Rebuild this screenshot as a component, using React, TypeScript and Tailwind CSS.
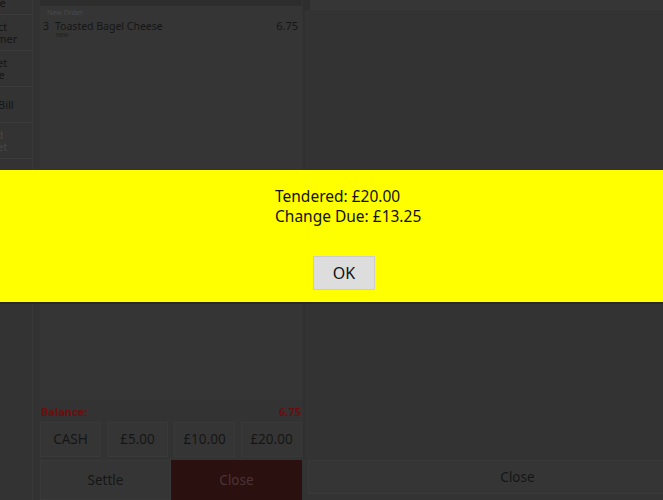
import React from "react";

const font = { fontFamily: '"Noto Sans", "Open Sans", sans-serif' };

function SideBtn({ lines, disabled }: { lines: string[]; disabled?: boolean }) {
  return (
    <div className="h-[36px] border-b border-[#3b3b3b] flex flex-col items-center justify-center ml-[-49px] w-[82px] leading-[12px] text-[11px] whitespace-nowrap">
      {lines.map((l) => (
        <div key={l} className={disabled ? "text-[#474747]" : "text-[#151515]"}>{l}</div>
      ))}
    </div>
  );
}

export default function App() {
  return (
    <div className="relative w-[663px] h-[500px] overflow-hidden bg-[#333333] flex" style={font}>
      {/* left column */}
      <div className="w-[33px] shrink-0 overflow-hidden border-r border-[#383838] flex flex-col">
        <div className="mt-[-21px]">
          <SideBtn lines={["Move", "Table"]} />
          <SideBtn lines={["Select", "Customer"]} />
          <SideBtn lines={["Ticket", "Note"]} />
          <SideBtn lines={["Print Bill"]} />
          <SideBtn lines={["Void", "Ticket"]} disabled />
        </div>
      </div>

      {/* order panel */}
      <div className="ml-[7px] w-[262px] shrink-0 flex flex-col">
        <div className="h-[6px] bg-[#2d2d2d]" />
        <div className="h-[397px] bg-[#353535] px-[3px] pt-[2px]">
          <div className="text-[7px] text-[#4a4a4a] pl-[4px] leading-[9px]">New Order</div>
          <div className="flex items-start mt-[3px] text-[10.5px] text-[#151515] leading-[12px]">
            <div className="w-[12px]">3</div>
            <div className="flex-1">
              <div>Toasted Bagel Cheese</div>
              <div className="text-[5.5px] leading-[6px] pl-[1px] text-[#1e1e1e]">NEW</div>
            </div>
            <div className="pr-[1px] text-[11px]">6.75</div>
          </div>
        </div>
        <div className="h-[19px] flex items-end justify-between px-[1px] text-[11px] font-bold text-[#6a0e0e] leading-[13px] pb-[1px]">
          <span>Balance:</span>
          <span>6.75</span>
        </div>
        <div className="h-[36px] mt-[3px] grid grid-cols-4 gap-[6px] text-[13.5px] text-[#151515]">
          {["CASH", "£5.00", "£10.00", "£20.00"].map((t) => (
            <div key={t} className="bg-[#353535] border border-[#393939] flex items-center justify-center">{t}</div>
          ))}
        </div>
        <div className="h-[40px] mt-[3px] grid grid-cols-2 text-[13.5px]">
          <div className="bg-[#353535] border border-[#393939] flex items-center justify-center text-[#151515]">Settle</div>
          <div className="bg-[#2b1010] flex items-center justify-center text-[#4a3434]">Close</div>
        </div>
      </div>

      {/* right panel */}
      <div className="ml-[1px] flex-1 flex flex-col min-w-0">
        <div className="h-[10px] flex">
          <div className="w-[7px] bg-[#2e2e2e]" />
          <div className="flex-1 bg-[#363636] border-b border-[#383838]" />
        </div>
        <div className="flex-1 flex">
          <div className="w-[2px] bg-[#303030]" />
          <div className="flex-1" />
        </div>
        <div className="h-[34px] mb-[6px] ml-[5px] mr-[-64px] bg-[#353535] border border-[#393939] flex items-center justify-center text-[13.5px] text-[#151515]">
          Close
        </div>
      </div>

      {/* modal band */}
      <div className="absolute left-0 right-0 top-[170px] h-[134px] bg-[#ffff00] border-b-2 border-[#2a2a22] flex flex-col items-start">
        <div className="mt-[16px] ml-[275px] text-[15.5px] leading-[20px] text-[#111] whitespace-nowrap">
          <div>Tendered: £20.00</div>
          <div>Change Due: £13.25</div>
        </div>
        <div className="mt-[30px] ml-[313px] w-[62px] h-[34px] bg-[#dddddd] border border-[#cccccc] flex items-center justify-center text-[16px] text-[#111]">
          OK
        </div>
      </div>
    </div>
  );
}
